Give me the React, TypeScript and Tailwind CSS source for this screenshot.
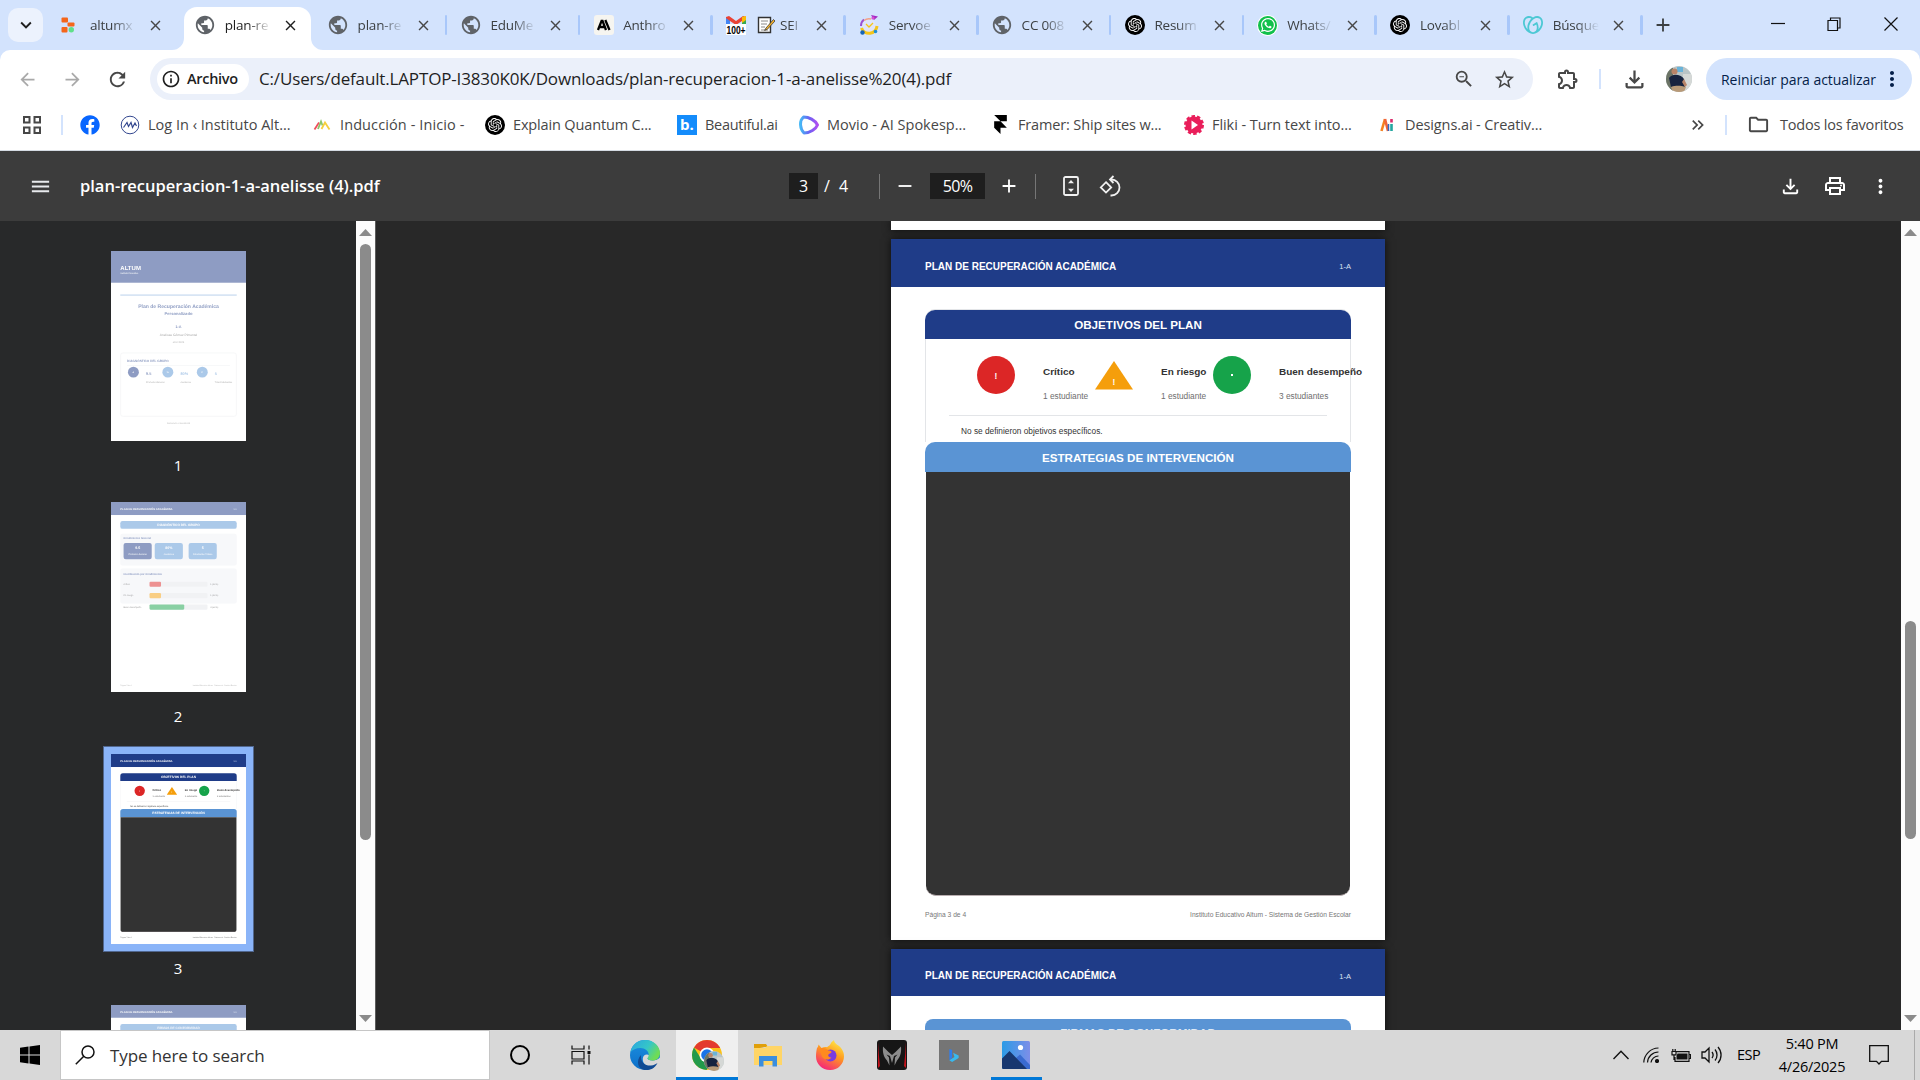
import React from "react";
import {
  MdPublic, MdClose, MdRefresh, MdArrowBack, MdArrowForward, MdOutlineInfo, MdStarBorder, MdZoomOut,
  MdOutlineExtension, MdMoreVert, MdAdd, MdRemove, MdMenu, MdOutlineFileDownload, MdOutlinePrint,
  MdOutlineFolder, MdKeyboardDoubleArrowRight, MdKeyboardArrowDown,
} from "react-icons/md";
import { FaFacebook, FaWhatsapp } from "react-icons/fa";
import { SiOpenai, SiFramer, SiGodaddy } from "react-icons/si";

/* ---------- favicons ---------- */

const Globe = () => <MdPublic className="size-[22px] text-[#5f6368]" />;

const OpenAi = () => (
  <span className="flex size-5 items-center justify-center rounded-full bg-black text-white">
    <SiOpenai className="size-3.5" />
  </span>
);

const AltumX = () => (
  <svg viewBox="0 0 14 16" className="mr-1 h-4 w-3.5">
    <rect x="0.5" y="0.5" width="6.5" height="5" rx="1" fill="#f4661b" />
    <rect x="6.5" y="5.5" width="7" height="4" rx="1" fill="#f4661b" />
    <rect x="0.5" y="10" width="6" height="5.5" rx="1" fill="#f4661b" />
    <circle cx="10.3" cy="12.8" r="2.7" fill="#5fe08a" />
  </svg>
);

const Anthropic = () => (
  <span className="flex size-5 items-center justify-center rounded-[3px] bg-[#f6f5f0] text-black">
    <svg viewBox="0 0 20 20" className="size-5" fill="none" stroke="currentColor" strokeWidth="2.3">
      <path d="M4 15 7.600 5.800h.9L12 15M5.500 12h5M11.300 5 15.500 15" />
    </svg>
  </span>
);

const Gmail = () => (
  <svg viewBox="0 0 20 20" className="size-5">
    <path d="M0 2v9h4V6l6 4 6-4v5h4V2l-3-1-7 5-7-5z" fill="#ea4335" />
    <path d="M0 3l4 3v5H0z" fill="#4285f4" />
    <path d="M20 3l-4 3v5h4z" fill="#34a853" />
    <path d="M16 2l4-1v4l-4 3z" fill="#fbbc04" />
    <rect y="9" width="20" height="11" fill="#fff" />
    <text x="10" y="18.500" textAnchor="middle" textLength="19" lengthAdjust="spacingAndGlyphs" fontSize="11" fontWeight="700" fontFamily="Liberation Sans, sans-serif">100+</text>
  </svg>
);

const Memo = () => (
  <svg viewBox="0 0 18 18" className="size-[18px]">
    <path d="M1.5 1.5h12v15h-12z" fill="#fff" stroke="#333" strokeWidth="1.4" />
    <path d="M4 5h7M4 8h6M4 11h4M4 14h7" stroke="#8a8a8a" />
    <path d="M16.5 3.5 9 12l-1.4 2.4 2.6-1L18 5z" fill="#f7b32b" stroke="#3b3b3b" strokeWidth=".8" />
  </svg>
);

const Servoe = () => (
  <svg viewBox="0 0 20 20" className="size-5" fill="none">
    <circle cx="10" cy="11" r="7" fill="#dfe5f8" />
    <path d="M2.500 13A8 8 0 0 0 18 11" stroke="#f5c518" strokeWidth="3" />
    <path d="M2 11a8 8 0 0 1 3-6.500" stroke="#9b4fd0" strokeWidth="2" />
    <path d="M5 5.500A8 8 0 0 1 12 4" stroke="#f2a28a" strokeWidth="1.600" />
    <path d="M12 0l7 1.500-4 3.500z" fill="#a32bc4" />
    <circle cx="14" cy="3" r="1.600" fill="#d74fd0" />
    <circle cx="3.500" cy="17.500" r="2.200" fill="#1565b8" />
    <circle cx="16.500" cy="16.500" r="1.800" fill="#1f8fd6" />
    <path d="M7 9l3 3 4-4" stroke="#f5c518" strokeWidth="1.300" />
  </svg>
);

const WhatsApp = () => (
  <span className="flex size-[19px] items-center justify-center rounded-full bg-[#12c04b] text-white ring-1 ring-white">
    <FaWhatsapp className="size-4" />
  </span>
);

/* ---------- tab strip ---------- */

type Tab = { title: string; icon: React.ReactNode; active?: boolean; sep?: boolean; extra?: React.ReactNode };

const tabs: Tab[] = [
  { title: "altumx", icon: <AltumX /> },
  { title: "plan-re", icon: <Globe />, active: true },
  { title: "plan-re", icon: <Globe />, sep: true },
  { title: "EduMe", icon: <Globe />, sep: true },
  { title: "Anthro", icon: <Anthropic />, sep: true },
  { title: "SEI", icon: <Gmail />, sep: true, extra: <Memo /> },
  { title: "Servoe", icon: <Servoe />, sep: true },
  { title: "CC 008", icon: <Globe />, sep: true },
  { title: "Resum", icon: <OpenAi />, sep: true },
  { title: "Whats/", icon: <WhatsApp />, sep: true },
  { title: "Lovabl", icon: <OpenAi />, sep: true },
  { title: "Búsque", icon: <SiGodaddy className="size-5 text-[#4cc8d4]" />, sep: true },
];

const TabItem = ({ tab, first }: { tab: Tab; first: boolean }) => (
  <div className="relative flex h-[43px] w-[132.8px] shrink-0 items-start">
    {tab.active && (
      <>
        <div className="absolute inset-y-0 left-[2px] w-[127px] rounded-t-[13px] bg-white" />
        <svg viewBox="0 0 12 12" className="absolute bottom-0 -left-[10px] size-3 fill-white"><path d="M12 0v12H0A12 12 0 0 0 12 0" /></svg>
        <svg viewBox="0 0 12 12" className="absolute -right-[8px] bottom-0 size-3 fill-white"><path d="M0 0v12h12A12 12 0 0 1 0 0" /></svg>
      </>
    )}
    <div className="relative flex h-9 w-full items-center">
      <span className={`flex shrink-0 justify-center ${first ? "w-[41px]" : "w-[43px] pl-[4px]"}`}>{tab.icon}</span>
      {tab.extra && <span className="ml-px w-[23px] shrink-0">{tab.extra}</span>}
      <span
        className={`text-[13.500px] tracking-[-0.2px] whitespace-nowrap [mask-image:linear-gradient(to_right,#000_50%,transparent)] ${tab.extra ? "w-[22px]" : "w-[46px]"} ${tab.active ? "text-[#1f1f1f]" : "text-[#3c4043]"}`}
      >
        {tab.title}
      </span>
      <span className="ml-[11px] flex w-[17px] justify-center">
        <MdClose className={`size-[17px] ${tab.active ? "text-[#1f1f1f]" : "text-[#474747]"}`} />
      </span>
      {tab.sep && <span className="absolute top-[8px] right-0 h-5 w-[2.5px] rounded bg-[#a8c7fa]" />}
    </div>
  </div>
);

const TabStrip = () => (
  <div className="flex h-[50px] items-start bg-[#d3e3fd]">
    <div className="mt-2 ml-2 flex h-[34px] w-[35px] items-center justify-center rounded-[10px] bg-[#ecf2fd]">
      <MdKeyboardArrowDown className="size-[22px] text-[#1f1f1f]" />
    </div>
    <div className="mt-[7px] ml-[6px] flex">
      {tabs.map((t, i) => <TabItem key={i} tab={t} first={i === 0} />)}
    </div>
    <MdAdd className="mt-[14px] ml-[9px] size-[22px] text-[#3c4043]" />
    <div className="mt-[17px] mr-[22px] ml-auto flex items-center text-[#111]">
      <svg viewBox="0 0 14 14" className="size-3.5" fill="none" stroke="currentColor" strokeWidth="1.200"><path d="M0 6.500h14" /></svg>
      <svg viewBox="0 0 14 14" className="ml-[42px] size-3.5" fill="none" stroke="currentColor" strokeWidth="1.200"><path d="M1 3.500h9.500v10H1zM3.500 3.500V1H13v10h-2.500" /></svg>
      <svg viewBox="0 0 14 14" className="ml-[43px] size-3.5" fill="none" stroke="currentColor" strokeWidth="1.200"><path d="M.5.5l13 13M13.500.5l-13 13" /></svg>
    </div>
  </div>
);

/* ---------- toolbar ---------- */

const Avatar = ({ className }: { className: string }) => (
  <svg viewBox="0 0 26 26" className={className}>
    <clipPath id="avatar"><circle cx="13" cy="13" r="13" /></clipPath>
    <g clipPath="url(#avatar)">
      <rect width="26" height="26" fill="#b9c4c6" />
      <path d="M0 0h7v26H0z" fill="#6c7466" />
      <path d="M11 1h6v5h-6z" fill="#69b3d9" />
      <path d="M17 8h9v18h-9z" fill="#d5d8d6" />
      <path d="M3 12c2-4 11-5 15 1l1 8H5z" fill="#17233f" />
      <circle cx="8.500" cy="5.500" r="3" fill="#b98468" />
      <path d="M18 13l3 6-2 2-3-5z" fill="#b98468" />
      <path d="M5 21c6-2 10-1 15 0l-2 5H7z" fill="#b89a78" />
    </g>
  </svg>
);

const Toolbar = () => (
  <div className="flex h-[58px] items-center rounded-t-[10px] bg-white text-[#474747]">
    <MdArrowBack className="ml-[17px] size-[21px] text-[#a9a9a9]" />
    <MdArrowForward className="ml-6 size-[21px] text-[#a9a9a9]" />
    <MdRefresh className="ml-[23px] size-[23px]" />
    <div className="ml-[21px] flex h-[42px] w-[1383px] items-center rounded-full bg-[#ebf0fa] pr-[17px] pl-[7px]">
      <div className="flex h-[30px] w-[92px] items-center rounded-full bg-white pl-[4px] text-[#1f1f1f]">
        <MdOutlineInfo className="size-5" />
        <span className="ml-[6px] text-[14.500px] font-semibold tracking-[-0.3px]">Archivo</span>
      </div>
      <span className="ml-[10px] text-[17px] tracking-[-0.15px] whitespace-nowrap text-[#1f1f1f]">
        C:/Users/default.LAPTOP-I3830K0K/Downloads/plan-recuperacion-1-a-anelisse%20(4).pdf
      </span>
      <MdZoomOut className="ml-auto size-[22px]" />
      <MdStarBorder className="ml-[18px] size-[23px]" />
    </div>
    <MdOutlineExtension className="ml-[23px] size-6" />
    <span className="ml-[19px] h-5 w-0.5 bg-[#d3e3fd]" />
    <MdOutlineFileDownload className="ml-5 size-[27px]" />
    <Avatar className="ml-[18px] size-[26px]" />
    <div className="ml-[14px] flex h-[42px] w-[206px] items-center rounded-full bg-[#d3e3fd] pl-[15px] text-[#041e49]">
      <span className="w-[157px] text-[14px] tracking-[-0.04px] whitespace-nowrap">Reiniciar para actualizar</span>
      <MdMoreVert className="ml-[2px] size-[24px]" />
    </div>
  </div>
);

/* ---------- bookmarks ---------- */

const bookmarks = [
  { label: "Log In ‹ Instituto Alt...", w: "w-[192px]", t: "tracking-[0px]", icon: (
    <svg viewBox="0 0 20 20" className="size-5" fill="none" stroke="#33478f"><circle cx="10" cy="10" r="8.800" /><path d="M3.500 12.500 7 7.500l1.500 4L11 7.500l1.500 5L15 8l1.500 3" strokeWidth="1.200" /></svg>) },
  { label: "Inducción - Inicio -", w: "w-[173px]", t: "tracking-[0.1px]", icon: (
    <svg viewBox="0 0 20 20" className="size-5" fill="none" strokeWidth="1.800"><path d="M2.500 14.500l4.500-7" stroke="#ee4f5d" /><path d="M6 14l3-7.500 1.500 4" stroke="#8cc56a" /><path d="M9.500 14l3.500-6.500 4.500 7" stroke="#f6cf3c" /></svg>) },
  { label: "Explain Quantum C...", w: "w-[192px]", t: "tracking-[-0.15px]", icon: <OpenAi /> },
  { label: "Beautiful.ai", w: "w-[122px]", t: "tracking-[-0.3px]", icon: (
    <span className="flex size-5 items-center justify-center bg-[#148cfb] text-[15px] leading-none font-bold text-white">b.</span>) },
  { label: "Movio - AI Spokesp...", w: "w-[192px]", t: "tracking-[0px]", icon: (
    <svg viewBox="0 0 20 20" className="size-5" fill="none" strokeWidth="3" strokeLinejoin="round">
      <defs><linearGradient id="movio"><stop stopColor="#45b7f5" /><stop offset=".5" stopColor="#6a62f2" /><stop offset="1" stopColor="#b04df0" /></linearGradient></defs>
      <path d="M4.500 2C0 6 1 14 5 18c6 0 12-4 13.500-8C16 5 10 2 4.500 2z" stroke="url(#movio)" /></svg>) },
  { label: "Framer: Ship sites w...", w: "w-[193px]", t: "tracking-[-0.15px]", icon: <SiFramer className="size-[19px] text-black" /> },
  { label: "Fliki - Turn text into...", w: "w-[193px]", t: "tracking-[-0.07px]", icon: (
    <svg viewBox="0 0 20 20" className="size-5"><circle cx="10" cy="10" r="8.500" fill="#e91e5a" stroke="#e91e5a" strokeWidth="3" strokeDasharray="3.340 2" /><path d="M7.500 5.500v9l6.500-4.500z" fill="#fff" /></svg>) },
  { label: "Designs.ai - Creativ...", w: "w-[200px]", t: "tracking-[-0.1px]", icon: (
    <svg viewBox="0 0 20 20" className="size-5" strokeWidth="2.600"><path d="M4.500 16 8 4" stroke="#f58220" /><path d="M8 4l3 12" stroke="#f2643a" /><path d="M14.500 9v7" stroke="#22a7a0" /><path d="M11.500 9v7" stroke="#2d6bc4" strokeWidth="1.500" /><path d="M14.500 4v3.500" stroke="#d92c6c" /></svg>) },
];

const Bookmarks = () => (
  <div className="flex h-[43px] items-center border-b border-[#d5dbe3] bg-white pb-[9px] text-[14.500px] whitespace-nowrap text-[#474747]">
    <svg viewBox="0 0 18 18" className="ml-[23px] size-[18px]" fill="none" stroke="#474747" strokeWidth="2"><path d="M1 1h5.500v5.500H1zM11.500 1H17v5.500h-5.500zM1 11.500h5.500V17H1zM11.500 11.500H17V17h-5.500z" /></svg>
    <span className="ml-5 h-5 w-[2px] bg-[#d3e3fd]" />
    <FaFacebook className="ml-[17px] size-5 text-[#0866ff]" />
    <div className="ml-5 flex">
      {bookmarks.map((b) => (
        <div key={b.label} className={`flex shrink-0 items-center gap-[8px] ${b.w}`}>
          {b.icon}
          <span className={b.t}>{b.label}</span>
        </div>
      ))}
    </div>
    <MdKeyboardDoubleArrowRight className="mr-[17px] ml-auto size-5" />
    <span className="mr-[20px] h-5 w-[2px] bg-[#d3e3fd]" />
    <MdOutlineFolder className="mr-[10px] size-[23px]" />
    <span className="w-[140px] tracking-[-0.2px]">Todos los favoritos</span>
  </div>
);

/* ---------- PDF bar ---------- */

const PdfBar = () => (
  <div className="flex h-[70px] items-center bg-[#3c3c3c] text-[16px] text-white">
    <MdMenu className="ml-[29px] size-[23px] text-[#e8eaed]" />
    <span className="ml-7 w-[709px] text-[16.500px] font-semibold">plan-recuperacion-1-a-anelisse (4).pdf</span>
    <span className="flex h-[26px] w-[29px] items-center justify-center bg-[#1e1e1e] text-[16px]">3</span>
    <span className="ml-[6px] w-3 text-[16px]">/</span>
    <span className="ml-[3px] w-[10px] text-[16px]">4</span>
    <span className="ml-[30px] h-[25px] w-px bg-[#767676]" />
    <MdRemove className="ml-[14px] size-[22px]" />
    <span className="ml-3.5 flex h-[26px] w-[55px] items-center justify-center bg-[#1e1e1e] text-[16px] tracking-[-0.6px]">50%</span>
    <MdAdd className="ml-[13px] size-[22px]" />
    <span className="ml-[15px] h-[25px] w-px bg-[#767676]" />
    <svg viewBox="0 0 16 20" className="ml-[27px] h-5 w-4" fill="none" stroke="#f1f1f1" strokeWidth="1.800">
      <rect x="1" y="1" width="14" height="18" rx="1.500" />
      <path d="M8 4l3 3.300H5zM8 16l3-3.300H5z" fill="#f1f1f1" stroke="none" />
    </svg>
    <svg viewBox="0 0 22 22" className="ml-[20px] size-[22px]" fill="none" stroke="#f1f1f1" strokeWidth="1.800">
      <path d="M7 7.200 12.200 12.400 7 17.600 1.800 12.400z" />
      <path d="M11.500 4.500h1a8 8 0 0 1 0 16h-1" />
      <path d="M14.500 1 11 4.500 14.500 8" />
    </svg>
    <MdOutlineFileDownload className="mr-[21px] ml-auto size-[23px]" />
    <MdOutlinePrint className="mr-[22px] size-[24px]" />
    <MdMoreVert className="mr-[28px] size-[23px]" />
  </div>
);

/* ---------- document pages (494px wide) ---------- */

const Page = ({ children }: { children: React.ReactNode }) => (
  <div className="flex h-[701px] w-[494px] shrink-0 flex-col bg-white font-['Liberation_Sans',Arial,sans-serif] leading-none text-[#333]">{children}</div>
);

const PageHeader = ({ short }: { short?: boolean }) => (
  <div className={`flex shrink-0 items-center justify-between bg-[#1f3c88] px-[34px] pt-[7px] text-white ${short ? "h-[47px]" : "h-12"}`}>
    <span className="text-[10px] font-bold whitespace-nowrap">PLAN DE RECUPERACIÓN ACADÉMICA</span>
    <span className="pt-px text-[7.500px] text-[#dbe2f2]">1-A</span>
  </div>
);

const PageFooter = ({ n }: { n: number }) => (
  <div className="mt-auto mb-[21px] flex justify-between px-[34px] text-[6.660px] text-[#777]">
    <span>Página {n} de 4</span>
    <span>Instituto Educativo Altum - Sistema de Gestión Escolar</span>
  </div>
);

const PageOne = () => (
  <Page>
    <div className="h-[117px] bg-[#1f3c88] pt-[51px] pl-[34px] text-white">
      <p className="text-[22px] font-bold">ALTUM</p>
      <p className="mt-[7px] text-[8px]">Instituto Educativo</p>
    </div>
    <div className="mx-[34px] mt-[44px] h-[3px] bg-[#5a94d4]" />
    <div className="mt-[32px] flex flex-col items-center text-[#1f3c88]">
      <p className="text-[18.500px] font-bold">Plan de Recuperación Académica</p>
      <p className="mt-2 text-[15px] font-bold">Personalizado</p>
      <p className="mt-[33px] text-[14px] font-bold">1-A</p>
      <p className="mt-5 text-[12px] text-[#555]">Anelisse Gómez Pimentel</p>
      <p className="mt-[17px] text-[9.500px] text-[#777]">abril 2025</p>
    </div>
    <div className="mx-[34px] mt-[32px] h-[236px] rounded-[10px] border-2 border-[#e5e7eb] px-[23px] pt-[23px]">
      <p className="text-[11.500px] font-bold text-[#1f3c88]">DIAGNÓSTICO DEL GRUPO</p>
      <div className="mt-2.5 h-0.5 bg-[#e5e7eb]" />
      <div className="mt-[3px] flex">
        {[["A", "9.5", "Promedio General", "bg-[#1f3c88]", "text-[#1f3c88]"], ["%", "80%", "Asistencia", "bg-[#5a94d4]", "text-[#5a94d4]"], ["E", "5", "Total Estudiantes", "bg-[#5a94d4]", "text-[#5a94d4]"]].map(([k, v, l, bg, fg]) => (
          <div key={l} className="flex w-[126px] shrink-0 gap-[26px] pl-[3px]">
            <span className={`flex size-10 shrink-0 items-center justify-center rounded-full text-[8px] font-bold text-white ${bg}`}>{k}</span>
            <span className="whitespace-nowrap">
              <b className={`mt-[19px] block text-[14px] ${fg}`}>{v}</b>
              <span className="mt-[19px] block text-[8.300px] text-[#555]">{l}</span>
            </span>
          </div>
        ))}
      </div>
    </div>
    <p className="mt-[20px] text-center text-[8.300px] text-[#777]">Generado el 26/4/2025</p>
  </Page>
);

const levels = [
  { label: "Crítico", value: "1 (20%)", bar: "w-[42px] bg-[#dc2626]" },
  { label: "En riesgo", value: "1 (20%)", bar: "w-[42px] bg-[#f59e0b]" },
  { label: "Buen desempeño", value: "3 (60%)", bar: "w-[127px] bg-[#16a34a]" },
];

const PageTwo = () => (
  <Page>
    <PageHeader />
    <div className="mx-[34px] mt-[22px] flex h-[29px] shrink-0 items-center justify-center rounded-lg bg-[#5a94d4] text-[11.700px] font-bold text-white">DIAGNÓSTICO DEL GRUPO</div>
    <div className="mx-[34px] mt-[18px] h-[117px] shrink-0 rounded-lg bg-[#f0f2f7] px-[12px] pt-[13px]">
      <p className="text-[10px] font-bold text-[#1f3c88]">Rendimiento General</p>
      <div className="mt-[11px] flex gap-[11px] text-center text-white">
        <div className="h-[60px] w-[103px] rounded-lg bg-[#1f3c88] pt-3"><b className="text-[13px]">9.5</b><p className="mt-2 text-[8.300px]">Promedio General</p></div>
        <div className="h-[60px] w-[103px] rounded-lg bg-[#5a94d4] pt-3"><b className="text-[13px]">80%</b><p className="mt-2 text-[8.300px]">Asistencia</p></div>
        <div className="ml-[10px] h-[60px] w-[103px] rounded-lg bg-[#5a94d4] pt-3"><b className="text-[13px]">5</b><p className="mt-2 text-[8.300px]">Estudiantes Totales</p></div>
      </div>
    </div>
    <div className="mx-[34px] mt-[11px] h-[129px] shrink-0 rounded-lg bg-[#f0f2f7] px-[12px] pt-[17px]">
      <p className="text-[10px] font-bold text-[#1f3c88]">Distribución por Rendimiento</p>
      <div className="mt-[22px] flex flex-col gap-[23px]">
        {levels.map((l) => (
          <div key={l.label} className="flex h-[19px] shrink-0 items-center text-[8.300px]">
            <span className="w-[95px]">{l.label}</span>
            <span className="h-[19px] w-[212px] rounded bg-[#e5e7eb]"><span className={`block h-[19px] rounded ${l.bar}`} /></span>
            <span className="ml-[10px]">{l.value}</span>
          </div>
        ))}
      </div>
    </div>
    <PageFooter n={2} />
  </Page>
);

const RiskItem = ({ shape, title, sub }: { shape: React.ReactNode; title: string; sub: string }) => (
  <div className="flex w-[118px] shrink-0 gap-[28px] whitespace-nowrap">
    <div className="h-[38px] w-[38px] shrink-0">{shape}</div>
    <div className="pt-[11px]">
      <p className="text-[9.970px] font-bold">{title}</p>
      <p className="mt-[15px] text-[8.300px] text-[#6e6e6e]">{sub}</p>
    </div>
  </div>
);

const PageThree = () => (
  <Page>
    <PageHeader />
    <div className="mx-[34px] mt-[22px] h-[133px] shrink-0 rounded-t-[10px] border-x border-t border-[#e3e5e8]">
      <div className="-mx-px flex h-[29px] items-center justify-center rounded-t-[10px] bg-[#1f3c88] pt-px text-[11.630px] font-bold text-white">OBJETIVOS DEL PLAN</div>
      <div className="flex pt-[17px] pl-[51px]">
        <RiskItem title="Crítico" sub="1 estudiante" shape={<div className="flex size-[38px] items-center justify-center rounded-full bg-[#dc2626] pt-[3px] text-[8.300px] font-bold text-white">!</div>} />
        <RiskItem title="En riesgo" sub="1 estudiante" shape={
          <svg viewBox="0 0 38 38" className="size-[38px]"><path d="M19 5 38 33.500H0z" fill="#f59e0b" /><text x="19" y="28.500" textAnchor="middle" fontSize="8.300" fontWeight="700" fill="#fff">!</text></svg>} />
        <RiskItem title="Buen desempeño" sub="3 estudiantes" shape={<div className="flex size-[38px] items-center justify-center rounded-full bg-[#16a34a] text-white"><span className="size-[2px] bg-white" /></div>} />
      </div>
      <div className="mx-[23px] mt-[15px] h-px bg-[#e3e5e8]" />
      <p className="mt-[11px] pl-[35px] text-[8.300px] text-[#333]">No se definieron objetivos específicos.</p>
    </div>
    <div className="mx-[34px] flex h-[30px] shrink-0 items-center justify-center rounded-t-[10px] bg-[#5a94d4] pt-px text-[11.630px] font-bold text-white">ESTRATEGIAS DE INTERVENCIÓN</div>
    <div className="mx-[35px] h-[424px] shrink-0 rounded-b-[10px] border-b border-[#b9aeb0] bg-[#333]" />
    <PageFooter n={3} />
  </Page>
);

const PageFour = () => (
  <Page>
    <PageHeader short />
    <div className="mx-[34px] mt-[23px] flex h-[29px] items-center justify-center rounded-lg bg-[#5a94d4] pb-[2px] text-[11.630px] font-bold text-[#dfeaf7]">FIRMAS DE CONFORMIDAD</div>
  </Page>
);

/* ---------- thumbnails & viewer ---------- */

const Thumb = ({ children, dim }: { children: React.ReactNode; dim?: boolean }) => (
  <div className="h-[190px] w-[135px] shrink-0 overflow-hidden bg-white">
    <div className={`origin-top-left scale-x-[0.2733] scale-y-[0.2711] [text-rendering:geometricPrecision] ${dim ? "opacity-50" : ""}`}>{children}</div>
  </div>
);

const Scrollbar = ({ thumb }: { thumb: string }) => (
  <div className="flex w-[19px] shrink-0 flex-col items-center bg-[#fcfcfc]">
    <svg viewBox="0 0 13 7" className="mt-2 h-[7px] w-[13px] shrink-0" fill="#8b8b8b"><path d="M6.500 0 13 7H0z" /></svg>
    <div className={`w-[11px] shrink-0 rounded-full bg-[#8b8b8b] ${thumb}`} />
    <svg viewBox="0 0 13 7" className="mt-auto mb-2 h-[7px] w-[13px] shrink-0" fill="#8b8b8b"><path d="M6.500 7 13 0H0z" /></svg>
  </div>
);

const label = "flex h-5 shrink-0 items-center text-[15px] text-white";

const Sidebar = () => (
  <div className="flex w-[376px] shrink-0 overflow-hidden border-r border-[#5c5c5c] bg-[#28292a]">
    <div className="flex w-[356px] shrink-0 flex-col items-center overflow-hidden pt-[30px]">
      <Thumb dim><PageOne /></Thumb>
      <span className={`mt-[14px] ${label}`}>1</span>
      <div className="mt-[27px]"><Thumb dim><PageTwo /></Thumb></div>
      <span className={`mt-[14px] ${label}`}>2</span>
      <div className="mt-[20px] border border-[#51678f] bg-[#8ab4f8] p-[7px]"><Thumb><PageThree /></Thumb></div>
      <span className={`mt-[6px] ${label}`}>3</span>
      <div className="mt-[27px]"><Thumb dim><PageFour /></Thumb></div>
    </div>
    <Scrollbar thumb="mt-2 h-[596px]" />
  </div>
);

const Viewer = () => (
  <div className="flex flex-1 overflow-hidden bg-[#282828]">
    <div className="flex flex-1 flex-col overflow-hidden pl-[515px]">
      <div className="h-[9px] w-[494px] shrink-0 bg-white shadow-[0_0_8px_#000000b0]" />
      <div className="mt-[9px] w-[494px] shrink-0 shadow-[0_0_8px_#000000b0]"><PageThree /></div>
      <div className="mt-[9px] w-[494px] shrink-0 shadow-[0_0_8px_#000000b0]"><PageFour /></div>
    </div>
    <Scrollbar thumb="mt-[385px] h-[218px]" />
  </div>
);

/* ---------- taskbar ---------- */

const Edge = () => (
  <svg viewBox="0 0 32 32" className="size-8">
    <defs>
      <linearGradient id="edgeA" x1="0" y1="0" x2="1" y2=".5"><stop stopColor="#2aa5e0" /><stop offset=".6" stopColor="#35c6c8" /><stop offset="1" stopColor="#6fdc55" /></linearGradient>
      <linearGradient id="edgeB" x1="0" y1="0" x2="0" y2="1"><stop stopColor="#1b8fe0" /><stop offset="1" stopColor="#0d6fc8" /></linearGradient>
    </defs>
    <circle cx="16" cy="16" r="15" fill="url(#edgeB)" />
    <path d="M18.500 19.300c0 1 1.500 2.200 5 2.200 3 0 5.500-1 8.500-3.500v8l-9 2c-5.500 0-9.500-3-9.200-8.500.3-2.500 2-4 4-4 2.200 0 3.400 1.500 3 3.500-.2 1-2.300-.4-2.300.3z" fill="#d8d8d8" />
    <path d="M1.500 13C3 5 9 1 16 1c9 0 15 6.500 15 13 0 5-3.500 7.500-7.500 7.500-3.500 0-5-1.200-5-2.200 0-.8 1.200-1.400 1.200-3.800C19.700 12 16 9 11.500 9 7 9 3.500 11 1.500 13z" fill="url(#edgeA)" />
    <path d="M12 16c-1 8 5 11 10 10.500 3-.2 5-1.400 6.500-2.500C25 30.500 20 31.500 15.500 31 9 30 6.500 22 12 16z" fill="#124b93" />
  </svg>
);

const ChromeIcon = () => (
  <div className="relative">
    <svg viewBox="0 0 32 32" className="size-8">
      <circle cx="16" cy="16" r="15" fill="#fbc116" />
      <path d="M16 16 3 8.500A15 15 0 0 1 29 8.500L29 9H16z" fill="#e33b2e" />
      <path d="M3 8.500A15 15 0 0 0 15.500 31l7-12L10 19.500z" fill="#229a4a" />
      <circle cx="16" cy="16" r="7.500" fill="#fff" />
      <circle cx="16" cy="16" r="5.800" fill="#1a73e8" />
    </svg>
    <Avatar className="absolute top-3 left-[13px] size-5" />
  </div>
);

const Explorer = () => (
  <svg viewBox="0 0 28 24" className="h-6 w-7">
    <path d="M0 1h12l2 3h-3L0 6z" fill="#e09f0a" />
    <path d="M0 5h11l2-2h15v19H0z" fill="#ffd566" />
    <path d="M5 13h18v10.500h-4.500V18h-9v5.500H5z" fill="#3b8ede" />
  </svg>
);

const Firefox = () => (
  <svg viewBox="0 0 30 30" className="size-[30px]">
    <defs><linearGradient id="ff" x1=".8" y1="0" x2=".3" y2="1"><stop stopColor="#fff04a" /><stop offset=".45" stopColor="#ff9a1f" /><stop offset="1" stopColor="#f5227c" /></linearGradient></defs>
    <path d="M2 8c1-1 1.500-2.500 1.500-3.500L6.500 8c2-1 4-1 5.500-.8C13.500 6 15.500 5 16 3c.5-1 2-2 3-3 0 4 5 5 7 8 2 2.500 3 5 3 8.500A13.800 13.800 0 0 1 15 30C7 30 1 24 1 16.500 1 13 1.500 10 2 8z" fill="url(#ff)" />
    <circle cx="15.500" cy="15.500" r="6" fill="#7a3be0" />
    <path d="M4 9c4-2.500 8 0 9.500 1.500 1.500 0 3 .5 3 1.500s-2 1.500-3 2.500c-1 1.200.5 3 3 3-3 3.500-8 2-9.500-1z" fill="#ff8a1f" />
  </svg>
);

const Predator = () => (
  <svg viewBox="0 0 30 30" className="size-[30px]">
    <rect width="30" height="30" rx="3" fill="#161616" />
    <path d="M1 2v26l2-2-1.200-12zM29 2v26l-2-2 1.200-12z" fill="#c3131c" />
    <path d="M6 6.500c-.5 6 .5 10 4 14l2.500 5-.5-8-2.500-3L13 16l2 7 2-7 3.500-1.500-2.500 3-.5 8 2.500-5c3.500-4 4.500-8 4-14L18.500 12 15 15l-3.500-3z" fill="#8c8c8c" />
  </svg>
);

const Bing = () => (
  <span className="flex size-[30px] items-center justify-center bg-[#757575]">
    <svg viewBox="0 0 12 14" className="h-[13px] w-3">
      <path d="M1 0l3 1.200v8.300L1 12z" fill="#2f7fee" />
      <path d="M5 4l6 3v2.800L4 14l-3-2 5.500-3.500L5.800 6.500z" fill="#39b9ee" />
    </svg>
  </span>
);

const Photos = () => (
  <svg viewBox="0 0 28 28" className="size-7">
    <defs><linearGradient id="ph"><stop stopColor="#2b9be6" /><stop offset="1" stopColor="#7d8ee8" /></linearGradient></defs>
    <rect width="28" height="28" rx="1.500" fill="url(#ph)" />
    <path d="M13 18l5-4.500L28 24v4H13z" fill="#3a6bd0" />
    <path d="M0 17.500 7.500 10 25 28H1.500A1.500 1.500 0 0 1 0 26.500z" fill="#17376f" />
    <circle cx="18.500" cy="6.500" r="2.600" fill="#fff" />
  </svg>
);

const apps = [
  { icon: <Edge />, cls: "border-transparent" },
  { icon: <ChromeIcon />, cls: "bg-[#efefef] border-[#0078d7]" },
  { icon: <Explorer />, cls: "border-transparent" },
  { icon: <Firefox />, cls: "border-transparent" },
  { icon: <Predator />, cls: "border-transparent" },
  { icon: <Bing />, cls: "border-transparent" },
];

const Taskbar = () => (
  <div className="flex h-[50px] items-stretch bg-[#d8d8d8] text-black">
    <div className="flex w-[60px] items-center justify-center">
      <svg viewBox="0 0 20 20" className="size-5"><path d="M0 2.800 8.500 1.600v7.900H0zM9.500 1.500 20 0v9.500H9.500zM0 10.500h8.500v7.900L0 17.200zM9.500 10.500H20V20L9.500 18.500z" /></svg>
    </div>
    <div className="flex w-[430px] items-center border border-[#c6c6c6] bg-white">
      <svg viewBox="0 0 20 20" className="ml-3.5 size-5" fill="none" stroke="#111" strokeWidth="1.500"><circle cx="13" cy="7" r="6" /><path d="M8.800 11.200.8 19.200" /></svg>
      <span className="ml-[15px] pt-px text-[17px] tracking-[-0.1px] text-[#333]">Type here to search</span>
    </div>
    <div className="flex w-[60px] items-center justify-center"><span className="size-5 rounded-full border-[2.500px] border-black" /></div>
    <div className="mr-[3px] flex w-[61px] items-center justify-center">
      <svg viewBox="0 0 20 20" className="size-5" fill="none" stroke="#111" strokeWidth="1.200"><path d="M1 .5V4h12V.5M1 6.500h12v7.500H1zM1 19.500V16h12v3.500M18 .5v4M18 9.500v10" /><path d="M16.500 6h3v3h-3z" fill="#111" stroke="none" /></svg>
    </div>
    {apps.map((a, i) => (
      <div key={i} className={`flex w-[61.800px] items-center justify-center border-b-[3px] pt-[3px] ${a.cls}`}>{a.icon}</div>
    ))}
    <div className="ml-[6px] flex w-[51px] items-center justify-center border-b-[3px] border-[#0078d7] pt-[3px]"><Photos /></div>
    <div className="ml-auto flex items-center">
      <svg viewBox="0 0 16 10" className="mr-[14px] h-2.5 w-4" fill="none" stroke="#111" strokeWidth="1.400"><path d="M.5 9 8 1.200 15.500 9" /></svg>
      <svg viewBox="0 0 16 16" className="mr-3 size-4" fill="none" stroke="#111" strokeWidth="1.200"><path d="M.8 15.500A15 15 0 0 1 15.500 1M4.500 15.500A11 11 0 0 1 15.500 5M8 15.500A7.500 7.500 0 0 1 15.500 9" /><circle cx="14" cy="14" r="1.500" fill="#111" /></svg>
      <svg viewBox="0 0 20 13" className="mr-[10px] h-[13px] w-5" fill="none" stroke="#111" strokeWidth="1.200"><path d="M5.500 2.600H18v9.800H4V8M18 5.500h1.500v4H18M1 2.500v3.300h4V2.500zM1.800 0v2.500M4.200 0v2.500M3 6v5" /><path d="M6.500 4.500h10v6H5.500V7z" fill="#111" stroke="none" /></svg>
      <svg viewBox="0 0 22 18" className="mr-[14px] h-[18px] w-[22px]" fill="none" stroke="#111" strokeWidth="1.300"><path d="M1 6h3l4-4v14l-4-4H1zM11 6a5 5 0 0 1 0 6M14 3.500a8.500 8.500 0 0 1 0 11M17 1a12 12 0 0 1 0 16" /></svg>
      <span className="w-[41px] text-[14.500px] tracking-[-0.5px]">ESP</span>
      <div className="w-[68px] text-center text-[14.500px] leading-[23px] tracking-[-0.250px] whitespace-nowrap"><p>5:40 PM</p><p>4/26/2025</p></div>
      <svg viewBox="0 0 20 20" className="mr-[25px] ml-[23px] size-5" fill="none" stroke="#111" strokeWidth="1.300"><path d="M.7.7h18.600v15.600H12.500L10 19l-2.500-2.700H.7z" /></svg>
      <span className="mr-[5px] h-[50px] w-px bg-[#aaa]" />
    </div>
  </div>
);

export default function App() {
  return (
    <div className="flex h-[1080px] w-[1920px] flex-col overflow-hidden bg-white font-['Open_Sans',sans-serif]">
      <TabStrip />
      <div className="bg-[#d3e3fd]"><Toolbar /></div>
      <Bookmarks />
      <PdfBar />
      <div className="flex h-[809px] overflow-hidden">
        <Sidebar />
        <Viewer />
      </div>
      <Taskbar />
    </div>
  );
}
